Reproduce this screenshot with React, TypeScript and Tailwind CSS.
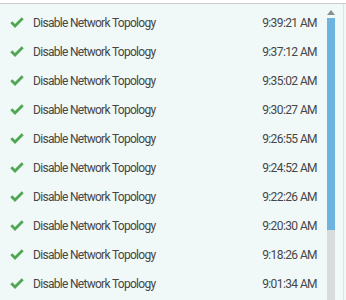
const rows = [
  '9:39:21 AM',
  '9:37:12 AM',
  '9:35:02 AM',
  '9:30:27 AM',
  '9:26:55 AM',
  '9:24:52 AM',
  '9:22:26 AM',
  '9:20:30 AM',
  '9:18:26 AM',
  '9:01:34 AM',
];

function Check() {
  return (
    <svg width="14" height="11" viewBox="0 0 14 11" className="shrink-0">
      <path d="M1.3 5.3 L5 9 L12.7 1.3" fill="none" stroke="#4fa653" strokeWidth="2.8" />
    </svg>
  );
}

export default function App() {
  return (
    <div className="w-[346px] h-[300px] bg-white pt-[3px]">
      <div className="flex h-[297px] border-t border-[#c9cccc] bg-[#f1f8f8]">
        <div className="flex-1 flex flex-col pt-[4px] font-['Roboto',sans-serif] text-[12px] text-[#464646]">
          {rows.map((t) => (
            <div key={t} className="flex items-center h-[29px] pl-[10px] pr-[5px]">
              <Check />
              <span className="ml-[9px] flex-1 tracking-[-0.7px]">Disable Network Topology</span>
              <span className="tracking-[-0.6px]">{t}</span>
            </div>
          ))}
        </div>
        <div className="w-[18px] flex flex-col items-center pt-[6px]">
          <div className="w-0 h-0 border-l-[4px] border-r-[4px] border-b-[5px] border-l-transparent border-r-transparent border-b-[#8a8f8f]" />
          <div className="w-[8px] flex-1 flex flex-col mt-[3px]">
            <div className="h-[212px] bg-[#6db5e0]" />
            <div className="flex-1 bg-[#d8dddc]" />
          </div>
        </div>
        <div className="w-[6px] flex justify-end pr-[2px]">
          <div className="w-px bg-[#dfe3e3]" />
        </div>
      </div>
    </div>
  );
}
